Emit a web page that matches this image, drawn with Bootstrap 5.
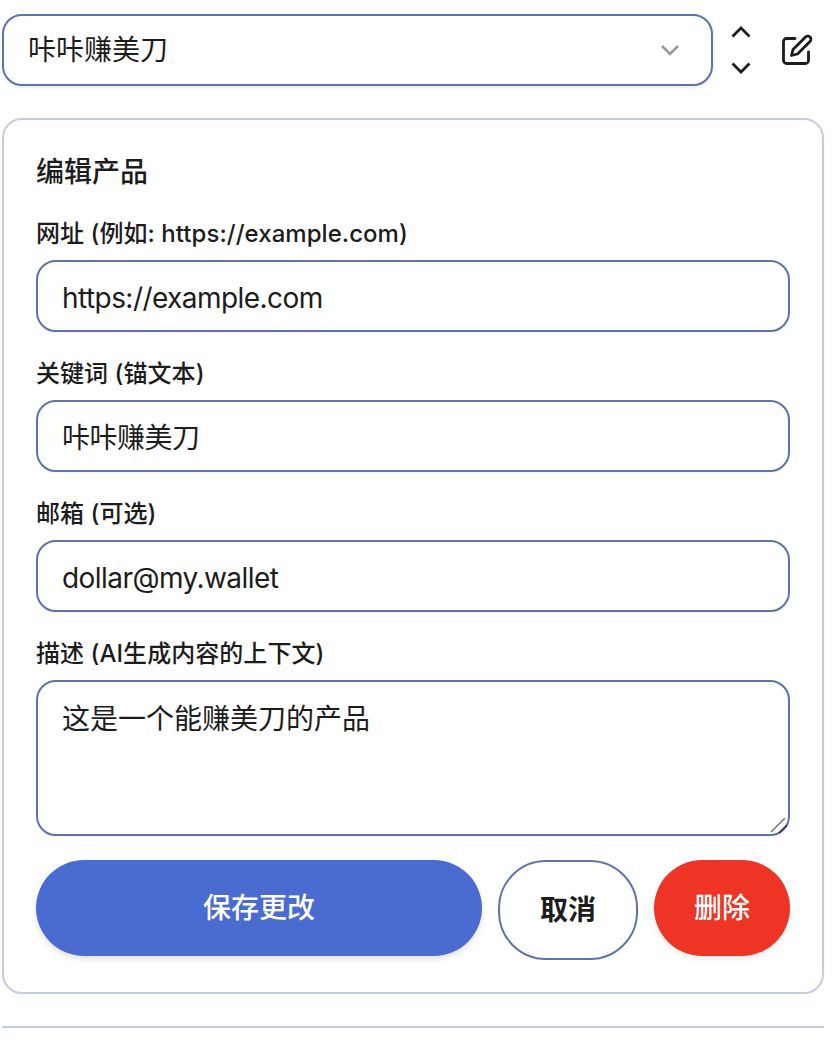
<!DOCTYPE html>
<html lang="zh">
<head>
<meta charset="utf-8">
<title>编辑产品</title>
<link href="https://cdn.jsdelivr.net/npm/bootstrap@5.3.0/dist/css/bootstrap.min.css" rel="stylesheet">
<style>
html,body{background:#fff;}
body{font-family:Inter,"Noto Sans CJK SC",sans-serif;color:#1c1c1c;padding:14px 8px 0 2px;height:1048px;overflow:hidden;}
.top-row{height:72px;margin-bottom:32px;}
.prod-select.form-select{flex:0 0 711px;width:711px;height:72px;border:2px solid #5e73a8;border-radius:20px;font-size:28px;color:#1c1c1c;padding:0 60px 0 24px;line-height:68px;box-shadow:0 2px 4px rgba(0,0,0,.08);background-image:url("data:image/svg+xml,%3Csvg xmlns='http://www.w3.org/2000/svg' viewBox='0 0 20 12'%3E%3Cpath d='M2 2l8 8 8-8' fill='none' stroke='%23999' stroke-width='2.6'/%3E%3C/svg%3E");background-size:20px 12px;background-position:right 31px center;}
.sort-col{width:56px;height:72px;padding:11px 0;}
.edit-slot{width:55px;height:72px;}
.edit-card{border:2px solid #c7cbe0;border-radius:20px;padding:34px 32px 36px 32px;height:876px;}
.edit-title{font-size:28px;font-weight:500;line-height:36px;margin:0 0 28px;color:#1c1c1c;}
.field-label{font-size:24px;font-weight:500;letter-spacing:.05px;line-height:32px;margin:0 0 10px;display:block;}
.field-input.form-control{height:72px;border:2px solid #5e73a8;border-radius:20px;font-size:28px;letter-spacing:-.5px;color:#1c1c1c;padding:0 24px;box-shadow:0 1px 2px rgba(0,0,0,.05);}
.field-input.latin-val.form-control{padding-top:3px;letter-spacing:-.55px;}
.field-block{margin-bottom:26px;}
textarea.field-input.form-control{height:156px;padding:16px 24px;line-height:42px;letter-spacing:0;resize:none;}
.field-last{margin-bottom:24px;}
.grip-mark{position:absolute;right:1px;bottom:1px;width:20px;height:20px;}
.act-btn{font-size:28px;font-weight:500;border-radius:48px;height:96px;padding:0;}
.act-save{flex:0 0 446px;background:#4a6cd0;border:0;color:#fff;box-shadow:0 3px 6px rgba(0,0,0,.12);}
.act-cancel{flex:0 0 140px;height:100px;background:#fff;border:2px solid #5e73a8;color:#1c1c1c;font-weight:600;}
.act-del{flex:0 0 136px;background:#ee3424;border:0;color:#fff;box-shadow:0 3px 6px rgba(0,0,0,.08);}
.foot-rule{margin:32px 0 0;border:0;border-top:2px solid #c7cbe0;opacity:1;}
</style>
</head>
<body>
<div class="d-flex align-items-center top-row">
  <select class="form-select prod-select"><option>咔咔赚美刀</option></select>
  <div class="d-flex flex-column align-items-center justify-content-between sort-col">
    <svg width="20" height="14" viewBox="0 0 20 14"><path d="M1.500 11.500L10 3l8.500 8.500" fill="none" stroke="#1c1c1c" stroke-width="2.800"/></svg>
    <svg width="20" height="14" viewBox="0 0 20 14"><path d="M1.500 2.500L10 11l8.500-8.500" fill="none" stroke="#1c1c1c" stroke-width="2.800"/></svg>
  </div>
  <div class="d-flex align-items-center justify-content-center edit-slot">
    <svg width="32" height="32" viewBox="0 0 32 32" fill="none" stroke="#1c1c1c" stroke-width="2.800" stroke-linecap="round" stroke-linejoin="round"><path d="M14 4.500H5.500a3 3 0 0 0-3 3V26.500a3 3 0 0 0 3 3H24.500a3 3 0 0 0 3-3V18"/><path d="M24.500 3a3.100 3.100 0 0 1 4.500 4.500L16.500 20l-6 1.500 1.500-6z"/></svg>
  </div>
</div>
<div class="edit-card">
  <h2 class="edit-title">编辑产品</h2>
  <form>
    <div class="field-block"><label class="field-label">网址 (例如: https://example.com)</label><input class="form-control field-input latin-val" value="https://example.com"></div>
    <div class="field-block"><label class="field-label">关键词 (锚文本)</label><input class="form-control field-input" value="咔咔赚美刀"></div>
    <div class="field-block"><label class="field-label">邮箱 (可选)</label><input class="form-control field-input latin-val" value="dollar@my.wallet"></div>
    <div class="field-last"><label class="field-label">描述 (AI生成内容的上下文)</label>
      <div class="position-relative">
        <textarea class="form-control field-input">这是一个能赚美刀的产品</textarea>
        <svg class="grip-mark" viewBox="0 0 20 20"><path d="M2 17L16 3" stroke="#777" stroke-width="1.600"/><path d="M10 18l8-8" stroke="#333" stroke-width="1.600"/></svg>
      </div>
    </div>
    <div class="d-flex align-items-start gap-3">
      <button type="button" class="btn act-btn act-save">保存更改</button>
      <button type="button" class="btn act-btn act-cancel">取消</button>
      <button type="button" class="btn act-btn act-del">删除</button>
    </div>
  </form>
</div>
<hr class="foot-rule">
<script src="https://cdn.jsdelivr.net/npm/bootstrap@5.3.0/dist/js/bootstrap.bundle.min.js"></script>
</body>
</html>
